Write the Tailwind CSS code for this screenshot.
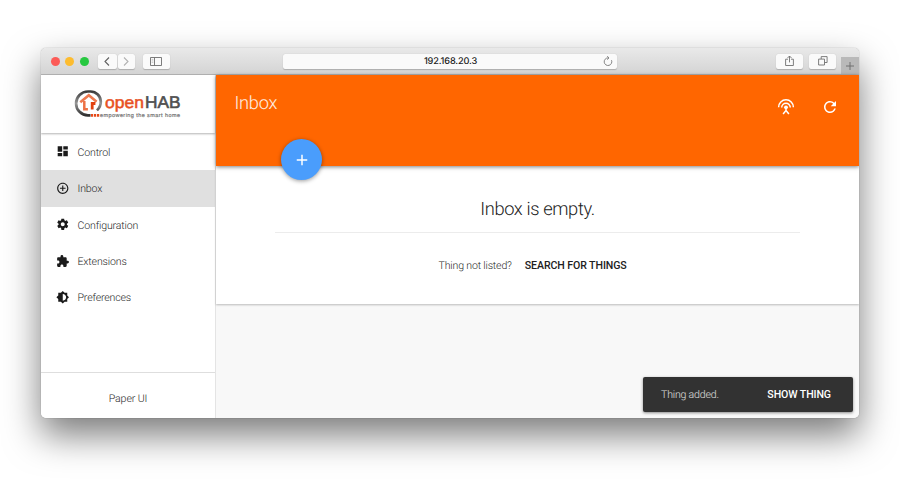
<!DOCTYPE html>
<html lang="en">
<head>
<meta charset="utf-8">
<title>openHAB Paper UI</title>
<script src="https://cdn.jsdelivr.net/npm/@tailwindcss/browser@4"></script>
</head>
<body class="h-[500px] w-[900px] overflow-hidden bg-white pt-12 pl-[41px] font-[Roboto,sans-serif] [text-rendering:geometricPrecision]">
<div class="flex h-[370px] w-[818px] flex-col overflow-hidden rounded-[5px] bg-white shadow-[0_0_1px_rgba(0,0,0,0.5),0_17px_36px_rgba(0,0,0,0.52)]">
  <header class="flex h-[27px] shrink-0 items-center border-b border-[#b3b3b3] bg-linear-to-b from-[#e9e9e9] to-[#d4d4d4] pl-[9.500px]">
    <div class="flex gap-[5.5px]">
      <span class="size-[9px] rounded-full bg-[#fc5b57]"></span>
      <span class="size-[9px] rounded-full bg-[#fdbc2f]"></span>
      <span class="size-[9px] rounded-full bg-[#27c840]"></span>
    </div>
    <div class="ml-[9.500px] flex gap-px">
      <button class="flex h-[15px] w-[18.5px] items-center justify-center rounded-[2px] bg-[#fafafa] shadow-[0_0.5px_1px_rgba(0,0,0,0.2)]"><svg class="h-[9px] w-[6px]" viewBox="0 0 6 9" fill="none" stroke="#606060" stroke-width="1.1"><path d="M5 .5 1 4.5l4 4"/></svg></button>
      <button class="flex h-[15px] w-[17.5px] items-center justify-center rounded-[2px] bg-[#fafafa] shadow-[0_0.5px_1px_rgba(0,0,0,0.2)]"><svg class="h-[9px] w-[6px]" viewBox="0 0 6 9" fill="none" stroke="#b2b2b2" stroke-width="1.1"><path d="m1 .5 4 4-4 4"/></svg></button>
    </div>
    <button class="ml-[7.5px] flex h-[15px] w-[27px] items-center justify-center rounded-[2px] bg-[#fafafa] shadow-[0_0.5px_1px_rgba(0,0,0,0.2)]"><svg class="h-[9px] w-[12px]" viewBox="0 0 12 9" fill="none" stroke="#6e6e6e" stroke-width=".9"><path d="M.5.5h11v8H.5zM4.5.5v8"/><path d="M1.700 2.400h1.600M1.700 3.900h1.600M1.700 5.400h1.600" stroke="#aaa" stroke-width=".6"/></svg></button>
    <div class="ml-[113.5px] flex h-[15px] w-[334px] items-center rounded-[2px] bg-[#fafafa] pl-[15px] pr-[4px] shadow-[0_0.5px_1px_rgba(0,0,0,0.2)]">
      <span class="flex-1 pt-[2px] text-center font-[Inter,sans-serif] text-[9.2px] leading-none font-medium tracking-[-0.15px] text-[#1c1c1c]">192.168.20.3</span>
      <svg class="h-[10px] w-[10px]" viewBox="0 0 10 10" fill="none" stroke="#777" stroke-width=".9"><path d="M8.500 4.200A3.800 3.800 0 1 1 5 1.900h.7M4.200.2l1.800 1.700-1.800 1.700"/></svg>
    </div>
    <button class="ml-[159px] flex h-[15px] w-[27px] items-center justify-center rounded-[2px] bg-[#fafafa] shadow-[0_0.5px_1px_rgba(0,0,0,0.2)]"><svg class="h-[12px] w-[9px]" viewBox="0 0 9 12" fill="none" stroke="#707070" stroke-width=".9"><path d="M3 4.200H.6v6.300h7.800V4.200H6M4.500 7.400V1M2.500 3l2-2 2 2"/></svg></button>
    <button class="ml-[6px] flex h-[15px] w-[27px] items-center justify-center rounded-[2px] bg-[#fafafa] shadow-[0_0.5px_1px_rgba(0,0,0,0.2)]"><svg class="h-[10px] w-[10px]" viewBox="0 0 10 10" fill="none" stroke="#707070" stroke-width=".9"><path d="M.6 3.100h5.900v5.900H.6zM3.200 3V.6h5.900v5.900H6.700"/></svg></button>
    <button class="ml-auto flex h-[17.500px] w-[18px] items-center justify-center self-end bg-[#b9b9b9]"><svg class="mt-[1px] h-[8px] w-[8px]" viewBox="0 0 8 8" stroke="#707070" stroke-width="1"><path d="M4 0v8M0 4h8"/></svg></button>
  </header>
  <div class="flex min-h-0 flex-1">
    <aside class="flex w-[175px] shrink-0 flex-col border-r border-[#e4e4e4] bg-white">
      <div class="h-[58px] shrink-0 pt-[13px] pl-[33px] shadow-[0_1px_2px_rgba(0,0,0,0.3)]">
        <svg class="h-[34px] w-[110px]" viewBox="0 0 110 34">
          <defs><linearGradient id="ring" x1="0" y1="0" x2="0" y2="1"><stop offset="0" stop-color="#3c3c3c"/><stop offset=".5" stop-color="#969696"/><stop offset="1" stop-color="#303030"/></linearGradient></defs>
          <path d="M16.500 27.300H14A11.600 11.600 0 0 1 14 3.500h2.500A10.300 10.300 0 0 1 26.800 13.800c0 3.800-1.600 6.400-3.800 8.600" fill="none" stroke="url(#ring)" stroke-width="2.700"/>
          <path d="M6.300 14.300 14.800 7.300l7.800 6.400" fill="none" stroke="#ee7a50" stroke-width="2.600"/>
          <path d="M10.300 13v8.300h3.600" fill="none" stroke="#ed7145" stroke-width="2.500"/><path d="M18.200 21.500v-6h3.200" fill="none" stroke="#e2410e" stroke-width="2.800"/>
          <path d="M17 26h2.200v2.800h-2.200zM20 26h2.200v2.800h-2.200zM23 26h2.200v2.800h-2.200z" fill="#e64a19"/>
          <text x="31" y="20.200" font-family="Liberation Sans, sans-serif" font-size="16.500" fill="#e8501f" stroke="#e8501f" stroke-width=".5" textLength="39" lengthAdjust="spacingAndGlyphs">open</text>
          <text x="71" y="20.200" font-family="Liberation Sans, sans-serif" font-size="17" fill="#505050" stroke="#505050" stroke-width=".6" textLength="35.500" lengthAdjust="spacingAndGlyphs">HAB</text>
          <text x="26" y="28.800" font-family="Liberation Sans, sans-serif" font-size="5.500" fill="#777" stroke="#777" stroke-width=".2" textLength="80" lengthAdjust="spacing">empowering the smart home</text>
        </svg>
      </div>
      <nav class="flex-1 pt-px text-[10.600px] font-light tracking-[-0.17px] text-[#2a2a2a]">
        <a class="flex h-[36.4px] items-center gap-[8.500px] pl-[14.500px]"><svg class="size-[13.500px] -translate-y-[0.5px]" viewBox="0 0 24 24" fill="#1b1b1b"><path d="M3 13h8V3H3v10zm0 8h8v-6H3v6zm10 0h8V11h-8v10zm0-18v6h8V3h-8z"/></svg><span class="pt-px">Control</span></a>
        <a class="flex h-[36.4px] items-center gap-[8.500px] bg-[#e0e0e0] pl-[14.500px]"><svg class="size-[13.500px] -translate-y-[0.5px]" viewBox="0 0 24 24" fill="#1b1b1b"><path d="M13 7h-2v4H7v2h4v4h2v-4h4v-2h-4V7zm-1-5C6.48 2 2 6.48 2 12s4.48 10 10 10 10-4.48 10-10S17.52 2 12 2zm0 18c-4.41 0-8-3.59-8-8s3.59-8 8-8 8 3.59 8 8-3.59 8-8 8z"/></svg><span class="pt-px">Inbox</span></a>
        <a class="flex h-[36.4px] items-center gap-[8.500px] pl-[14.500px]"><svg class="size-[13.500px] -translate-y-[0.5px]" viewBox="0 0 24 24" fill="#1b1b1b"><path d="M19.43 12.98c.04-.32.07-.64.07-.98s-.03-.66-.07-.98l2.11-1.65c.19-.15.24-.42.12-.64l-2-3.46c-.12-.22-.39-.3-.61-.22l-2.49 1c-.52-.4-1.08-.73-1.69-.98l-.38-2.65C14.46 2.18 14.25 2 14 2h-4c-.25 0-.46.18-.49.42l-.38 2.65c-.61.25-1.17.59-1.69.98l-2.49-1c-.23-.09-.49 0-.61.22l-2 3.46c-.13.22-.07.49.12.64l2.11 1.65c-.04.32-.07.65-.07.98s.03.66.07.98l-2.11 1.65c-.19.15-.24.42-.12.64l2 3.46c.12.22.39.3.61.22l2.49-1c.52.4 1.08.73 1.69.98l.38 2.65c.03.24.24.42.49.42h4c.25 0 .46-.18.49-.42l.38-2.65c.61-.25 1.17-.59 1.69-.98l2.49 1c.23.09.49 0 .61-.22l2-3.46c.12-.22.07-.49-.12-.64l-2.11-1.65zM12 15.5c-1.93 0-3.5-1.57-3.5-3.5s1.57-3.5 3.5-3.5 3.5 1.57 3.5 3.5-1.57 3.5-3.5 3.5z"/></svg><span class="pt-px">Configuration</span></a>
        <a class="flex h-[36.4px] items-center gap-[8.500px] pl-[14.500px]"><svg class="size-[13.500px] -translate-y-[0.5px]" viewBox="0 0 24 24" fill="#1b1b1b"><path d="M20.5 11H19V7c0-1.1-.9-2-2-2h-4V3.5a2.5 2.5 0 0 0-5 0V5H4c-1.1 0-1.99.9-1.99 2v3.8H3.500c1.490 0 2.700 1.210 2.700 2.700s-1.210 2.700-2.700 2.700H2V20c0 1.100.9 2 2 2h3.800v-1.500c0-1.490 1.210-2.700 2.700-2.700s2.700 1.210 2.700 2.700V22H17c1.100 0 2-.9 2-2v-4h1.500a2.500 2.500 0 0 0 0-5z"/></svg><span class="pt-px">Extensions</span></a>
        <a class="flex h-[36.4px] items-center gap-[8.500px] pl-[14.500px]"><svg class="size-[13.500px] -translate-y-[0.5px]" viewBox="0 0 24 24" fill="#1b1b1b"><path d="M20 15.310 23.310 12 20 8.690V4h-4.690L12 .69 8.690 4H4v4.690L.69 12 4 15.310V20h4.690L12 23.310 15.310 20H20v-4.690zM12 18V6c3.310 0 6 2.690 6 6s-2.690 6-6 6z"/></svg><span class="pt-px">Preferences</span></a>
      </nav>
      <div class="flex h-[46px] items-center justify-center border-t border-[#dedede] pt-[6px] text-[10.600px] font-light tracking-[-0.1px] text-[#2a2a2a]">Paper UI</div>
    </aside>
    <main class="relative flex flex-1 flex-col bg-[#f8f8f8]">
      <div class="z-10 flex h-[91px] shrink-0 items-start bg-[#ff6600] pr-[20px] pl-[18.500px] shadow-[0_1px_4px_rgba(0,0,0,0.5)]">
        <h1 class="mt-[18px] flex-1 text-[18.3px] leading-[22px] font-light tracking-[-0.3px] text-white/90">Inbox</h1>
        <svg class="mt-[23px] size-[18px]" viewBox="0 0 18 18" fill="none" stroke="#fff" stroke-width="1.5"><path d="M1.600 9.200a7.400 7.400 0 0 1 14.800 0M4.700 9.500a4.300 4.300 0 0 1 8.600 0M9 9.200v4.500M9 12.500l-2.900 3.500M9 12.500l2.900 3.500"/><circle cx="9" cy="9.300" r="1.900" fill="#fff" stroke="none"/></svg>
        <svg class="mt-[23px] ml-[26px] size-[18px]" viewBox="0 0 24 24" fill="#fff"><path d="M17.650 6.350A7.958 7.958 0 0 0 12 4c-4.420 0-7.990 3.580-7.990 8s3.570 8 7.990 8c3.730 0 6.840-2.550 7.730-6h-2.080A5.990 5.990 0 0 1 12 18c-3.310 0-6-2.690-6-6s2.690-6 6-6c1.660 0 3.140.69 4.220 1.780L13 11h7V4l-2.350 2.350z"/></svg>
      </div>
      <button class="absolute top-[64px] left-[65px] z-20 flex size-[41px] items-center justify-center rounded-full bg-[#4a9dfc] shadow-[0_1px_4px_rgba(0,0,0,0.4)]"><svg class="size-[18px]" viewBox="0 0 24 24" fill="#fff"><path d="M19 13h-6v6h-2v-6H5v-2h6V5h2v6h6v2z"/></svg></button>
      <section class="h-[138px] shrink-0 bg-white px-[59px] pt-[32px] shadow-[0_1px_2px_rgba(0,0,0,0.25)]">
        <h2 class="border-b border-[#ececec] pt-px pb-[11px] text-center text-[18.3px] leading-[22px] font-light tracking-[-0.37px] text-[#212121]">Inbox is empty.</h2>
        <div class="mt-[25px] flex items-center pl-[163.500px] text-[10.600px] leading-[16px]"><span class="font-light tracking-[-0.18px] text-[#2a2a2a]">Thing not listed?</span><button class="ml-[13px] font-medium tracking-[-0.09px] text-[#212121]">SEARCH FOR THINGS</button></div>
      </section>
      <div class="absolute right-[6px] bottom-[6px] flex h-[35px] w-[210px] items-center justify-between rounded-[2px] bg-[#323232] pt-px pr-[22px] pl-[18px] text-[10.600px] shadow-[0_1px_3px_rgba(0,0,0,0.45)]"><span class="font-light tracking-[-0.2px] text-white/85">Thing added.</span><button class="font-medium tracking-[-0.1px] text-white">SHOW THING</button></div>
    </main>
  </div>
</div>
</body>
</html>
